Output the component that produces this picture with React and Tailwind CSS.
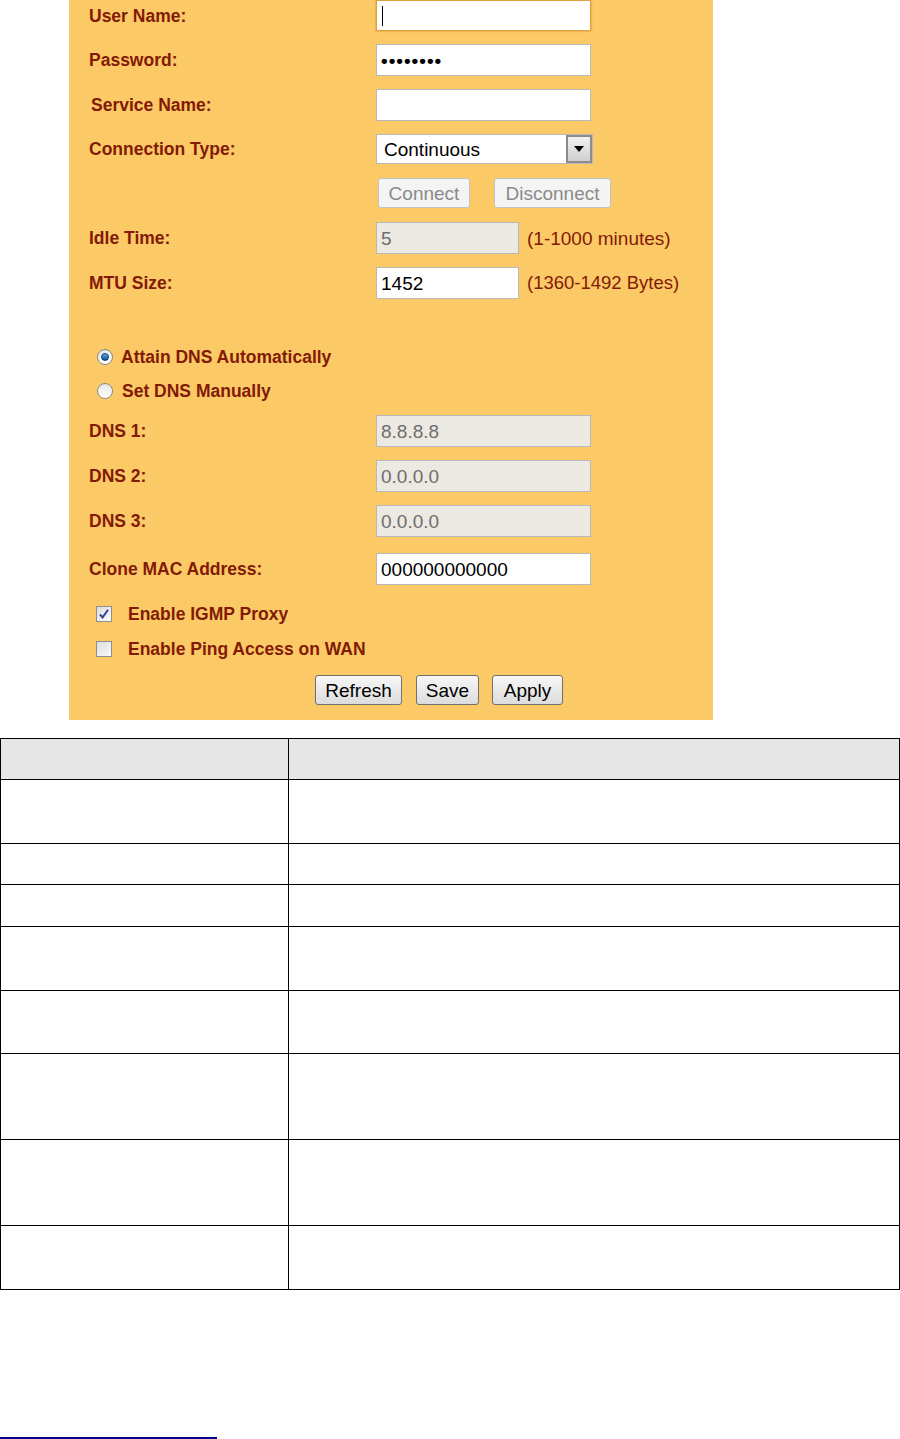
import React from "react";

const font = { fontFamily: '"Liberation Sans", Arial, sans-serif' };

function Label({ children, className = "" }) {
  return (
    <div className={"w-[287px] shrink-0 pt-[2px] text-[17.5px] font-bold text-[#821a06] leading-none " + className}>
      {children}
    </div>
  );
}

function Box({ children, disabled, w = "w-[215px]", className = "" }) {
  return (
    <div
      className={
        "h-full flex items-center pl-[4px] text-[19px] leading-none border border-[#b9b9b9] " +
        (disabled ? "bg-[#ebe9e2] text-[#6e6e6e] " : "bg-white text-black ") +
        w +
        " " +
        className
      }
    >
      {children}
    </div>
  );
}

function Row({ mt, h, children }) {
  return (
    <div className={"flex items-center pl-[20px] " + mt + " " + h}>{children}</div>
  );
}

function Radio({ checked }) {
  return (
    <div className="w-[16px] h-[16px] rounded-full border border-[#8a8a8a] bg-gradient-to-b from-[#e6e6e6] to-[#ffffff] flex items-center justify-center">
      {checked && (
        <div className="w-[8px] h-[8px] rounded-full bg-gradient-to-b from-[#5aa9e8] to-[#0d4f9c] border border-[#123a6a]" />
      )}
    </div>
  );
}

function Check({ checked }) {
  return (
    <div className="w-[16px] h-[16px] border border-[#8e8f8f] bg-gradient-to-br from-[#dcdcdc] to-[#fbfbfb] flex items-center justify-center">
      {checked && (
        <svg width="12" height="12" viewBox="0 0 12 12">
          <path d="M2 6.5 L4.6 9.5 L10 1.8" fill="none" stroke="#2e3fa0" strokeWidth="2" />
        </svg>
      )}
    </div>
  );
}

function Btn({ children, disabled, className = "" }) {
  return (
    <div
      className={
        "h-full flex items-center justify-center text-[19px] leading-none rounded-[3px] border " +
        (disabled
          ? "border-[#c2c2c2] bg-[#f4f4f4] text-[#8a8a8a] "
          : "border-[#707070] bg-gradient-to-b from-[#f7f7f7] to-[#dcdcdc] text-black ") +
        className
      }
    >
      {children}
    </div>
  );
}

const rowHeights = [41, 64, 41, 42, 64, 63, 86, 86, 64];

export default function App() {
  return (
    <div className="w-[900px] h-[1439px] bg-white overflow-hidden" style={font}>
      {/* Panel */}
      <div className="ml-[69px] w-[644px] h-[720px] bg-[#fcc967] flex flex-col">
        <Row mt="mt-0" h="h-[31px]">
          <Label>User Name:</Label>
          <Box className="border-[#e0a040] shadow-[0_0_2px_#d08a20]">
            <div className="w-px h-[20px] bg-black ml-[1px]" />
          </Box>
        </Row>
        <Row mt="mt-[13px]" h="h-[32px]">
          <Label>Password:</Label>
          <Box>
            <span className="tracking-[1px] text-[19px] font-bold">••••••••</span>
          </Box>
        </Row>
        <Row mt="mt-[13px]" h="h-[32px]">
          <Label className="pl-[2px]">Service Name:</Label>
          <Box />
        </Row>
        <Row mt="mt-[13px]" h="h-[30px]">
          <Label>Connection Type:</Label>
          <div className="h-full w-[217px] flex border border-[#b9b9b9] bg-white">
            <div className="flex-1 flex items-center pl-[7px] text-[19px] leading-none text-black">Continuous</div>
            <div className="w-[26px] h-full border-2 border-[#8c8c8c] bg-gradient-to-b from-[#f2f2f2] to-[#cfcfcf] flex items-center justify-center">
              <svg width="10" height="6" viewBox="0 0 10 6">
                <path d="M0 0 L10 0 L5 6 Z" fill="#000" />
              </svg>
            </div>
          </div>
        </Row>
        <Row mt="mt-[14px]" h="h-[30px]">
          <div className="w-[289px] shrink-0" />
          <Btn disabled className="w-[92px]">Connect</Btn>
          <Btn disabled className="w-[117px] ml-[24px]">Disconnect</Btn>
        </Row>
        <Row mt="mt-[14px]" h="h-[32px]">
          <Label>Idle Time:</Label>
          <Box disabled w="w-[143px]">5</Box>
          <span className="ml-[8px] text-[19px] text-[#821a06] leading-none">(1-1000 minutes)</span>
        </Row>
        <Row mt="mt-[13px]" h="h-[32px]">
          <Label>MTU Size:</Label>
          <Box w="w-[143px]">1452</Box>
          <span className="ml-[8px] text-[18.5px] text-[#821a06] leading-none">(1360-1492 Bytes)</span>
        </Row>
        <div className="mt-[48px] h-[20px] flex items-center pl-[28px]">
          <Radio checked />
          <span className="ml-[8px] pt-[1px] text-[17.5px] font-bold text-[#821a06] leading-none">Attain DNS Automatically</span>
        </div>
        <div className="mt-[14px] h-[20px] flex items-center pl-[28px]">
          <Radio />
          <span className="ml-[9px] pt-[1px] text-[17.5px] font-bold text-[#821a06] leading-none">Set DNS Manually</span>
        </div>
        <Row mt="mt-[14px]" h="h-[32px]">
          <Label>DNS 1:</Label>
          <Box disabled>8.8.8.8</Box>
        </Row>
        <Row mt="mt-[13px]" h="h-[32px]">
          <Label>DNS 2:</Label>
          <Box disabled>0.0.0.0</Box>
        </Row>
        <Row mt="mt-[13px]" h="h-[32px]">
          <Label>DNS 3:</Label>
          <Box disabled>0.0.0.0</Box>
        </Row>
        <Row mt="mt-[16px]" h="h-[32px]">
          <Label>Clone MAC Address:</Label>
          <Box>000000000000</Box>
        </Row>
        <div className="mt-[19px] h-[20px] flex items-center pl-[27px]">
          <Check checked />
          <span className="ml-[16px] pt-[1px] text-[17.5px] font-bold text-[#821a06] leading-none">Enable IGMP Proxy</span>
        </div>
        <div className="mt-[15px] h-[20px] flex items-center pl-[27px]">
          <Check />
          <span className="ml-[16px] pt-[1px] text-[17.5px] font-bold text-[#821a06] leading-none">Enable Ping Access on WAN</span>
        </div>
        <div className="mt-[16px] h-[30px] flex pl-[246px]">
          <Btn className="w-[87px]">Refresh</Btn>
          <Btn className="w-[63px] ml-[14px]">Save</Btn>
          <Btn className="w-[71px] ml-[13px]">Apply</Btn>
        </div>
      </div>

      {/* Table */}
      <div className="mt-[18px] w-[900px] border-t border-l border-r border-black">
        {rowHeights.map((h, i) => (
          <div
            key={i}
            className={"flex border-b border-black " + (i === 0 ? "bg-[#e6e6e6]" : "bg-white")}
            style={{ height: h }}
          >
            <div className="w-[288px] shrink-0 border-r border-black" />
            <div className="flex-1" />
          </div>
        ))}
      </div>

      <div className="mt-[147px] w-[217px] h-[1.5px] bg-[#00008b]" />
    </div>
  );
}
